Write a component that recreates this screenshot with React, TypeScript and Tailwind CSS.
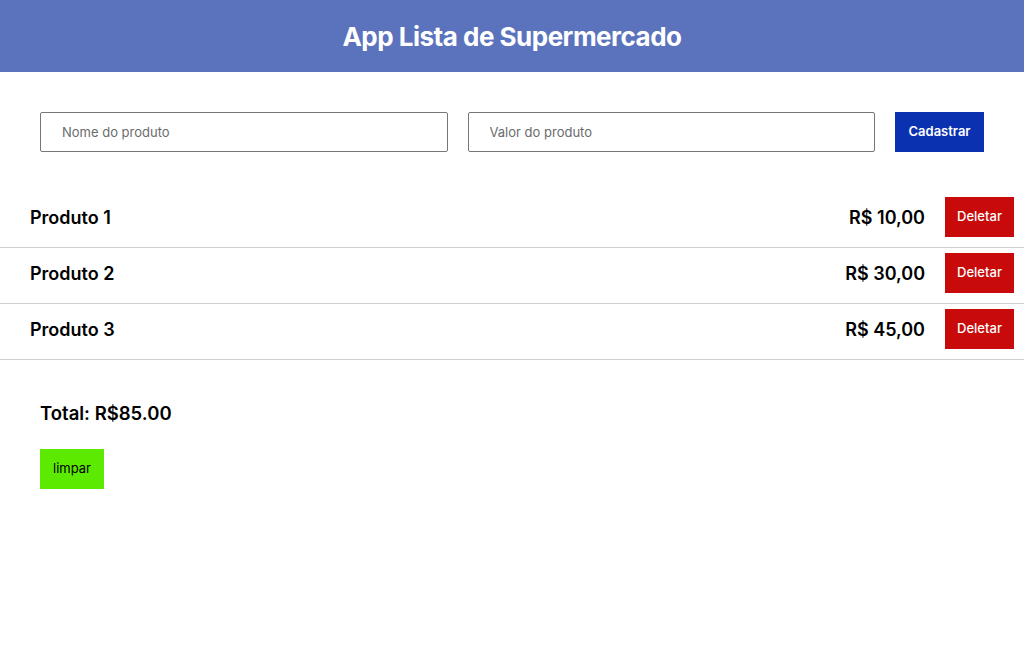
import { useState } from "react";

type Produto = { id: number; nome: string; valor: number };

const fmt = (v: number) => "R$ " + v.toFixed(2).replace(".", ",");

const App = () => {
    const [produtos, setProdutos] = useState<Produto[]>([
        { id: 1, nome: "Produto 1", valor: 10 },
        { id: 2, nome: "Produto 2", valor: 30 },
        { id: 3, nome: "Produto 3", valor: 45 },
    ]);
    const [nome, setNome] = useState("");
    const [valor, setValor] = useState("");

    const total = produtos.reduce((s, p) => s + p.valor, 0);

    const cadastrar = () => {
        const v = parseFloat(valor.replace(",", "."));
        if (!nome || isNaN(v)) return;
        setProdutos([...produtos, { id: Date.now(), nome, valor: v }]);
        setNome("");
        setValor("");
    };

    return (
        <div className="min-h-[660px] bg-white text-black" style={{ fontFamily: "Inter, 'Noto Sans', sans-serif" }}>
            <header className="h-[72px] bg-[#5b73bd] flex items-center justify-center">
                <h1 className="text-[26px] font-bold text-white tracking-[-0.5px]">App Lista de Supermercado</h1>
            </header>

            <div className="flex items-center gap-5 px-10 py-10">
                <input
                    className="flex-1 h-10 border border-[#767676] rounded-[2px] px-[21px] text-[13px] outline-none placeholder:text-[#6b6b6b]"
                    placeholder="Nome do produto"
                    value={nome}
                    onChange={e => setNome(e.target.value)}
                />
                <input
                    className="flex-1 h-10 border border-[#767676] rounded-[2px] px-[21px] text-[13px] outline-none placeholder:text-[#6b6b6b]"
                    placeholder="Valor do produto"
                    value={valor}
                    onChange={e => setValor(e.target.value)}
                />
                <button onClick={cadastrar} className="h-10 w-[89px] bg-[#0a32b0] text-white text-[13px] font-semibold">
                    Cadastrar
                </button>
            </div>

            <ul>
                {produtos.map(p => (
                    <li key={p.id} className="flex items-center border-b border-[#cfcfcf] pl-[30px] pr-[10px] pt-[5px] pb-[10px]">
                        <span className="flex-1 text-[18px] font-semibold">{p.nome}</span>
                        <span className="text-[18px] font-semibold mr-5">{fmt(p.valor)}</span>
                        <button
                            onClick={() => setProdutos(produtos.filter(x => x.id !== p.id))}
                            className="h-10 w-[69px] bg-[#c80a0a] text-white text-[13px] font-medium"
                        >
                            Deletar
                        </button>
                    </li>
                ))}
            </ul>

            <div className="px-10 pt-10">
                <p className="text-[18.5px] font-semibold leading-[27px]">Total: R${total.toFixed(2)}</p>
                <button onClick={() => setProdutos([])} className="mt-[22px] h-10 w-16 bg-[#5ceb00] text-[13px]">
                    limpar
                </button>
            </div>
        </div>
    );
};

export default App;
